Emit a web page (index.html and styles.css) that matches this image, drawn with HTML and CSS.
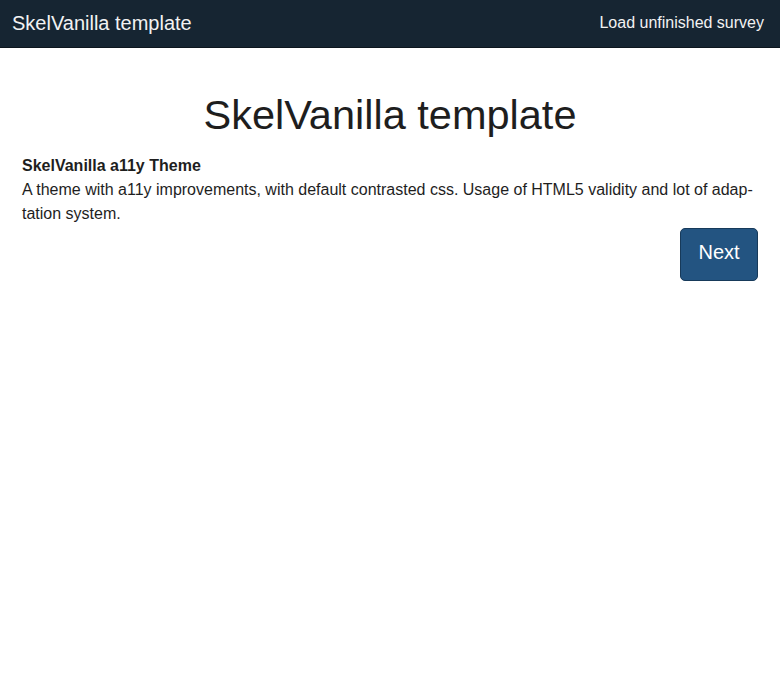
FILE: index.html
```html
<!DOCTYPE html>
<html lang="en">
<head>
<meta charset="utf-8">
<title>SkelVanilla template</title>
<link rel="stylesheet" href="styles.css">
</head>
<body>
<header class="navbar">
  <span class="brand">SkelVanilla template</span>
  <a class="nav-link" href="#">Load unfinished survey</a>
</header>
<main class="content">
  <h1 class="survey-title">SkelVanilla template</h1>
  <div class="survey-desc">
    <p class="theme-name">SkelVanilla a11y Theme</p>
    <p class="theme-text">A theme with a11y improvements, with default contrasted css. Usage of HTML5 validity and lot of adap&shy;tation system.</p>
  </div>
  <div class="actions">
    <button class="btn-next" type="button">Next</button>
  </div>
</main>
</body>
</html>
```

FILE: styles.css
```css
html, body {
  margin: 0;
  padding: 0;
  background: #ffffff;
  font-family: "Liberation Sans", Arial, sans-serif;
  color: #1e1e1e;
}

.navbar {
  height: 48px;
  box-sizing: border-box;
  background: #162532;
  border-bottom: 1px solid #0d161e;
  display: flex;
  align-items: center;
  justify-content: space-between;
  padding: 0 16px 1px 12px;
}

.brand {
  color: #f2f2f2;
  font-size: 20px;
}

.nav-link {
  color: #f2f2f2;
  font-size: 16px;
  text-decoration: none;
}

.content {
  padding: 0 22px;
}

.survey-title {
  margin: 40px 0 0;
  text-align: center;
  font-weight: normal;
  font-size: 41.5px;
  line-height: 54px;
  color: #1e1e1e;
}

.survey-desc {
  margin-top: 12px;
  font-size: 16px;
  line-height: 24px;
  hyphens: manual;
}

.survey-desc p {
  margin: 0;
}

.theme-name {
  font-weight: bold;
}

.actions {
  display: flex;
  justify-content: flex-end;
  margin-top: 2px;
}

.btn-next {
  font-family: "Liberation Sans", Arial, sans-serif;
  font-size: 20px;
  color: #ffffff;
  background: #235481;
  border: 1px solid #173a5a;
  border-radius: 5px;
  width: 78px;
  height: 53px;
  padding: 0 0 4px;
}
```
